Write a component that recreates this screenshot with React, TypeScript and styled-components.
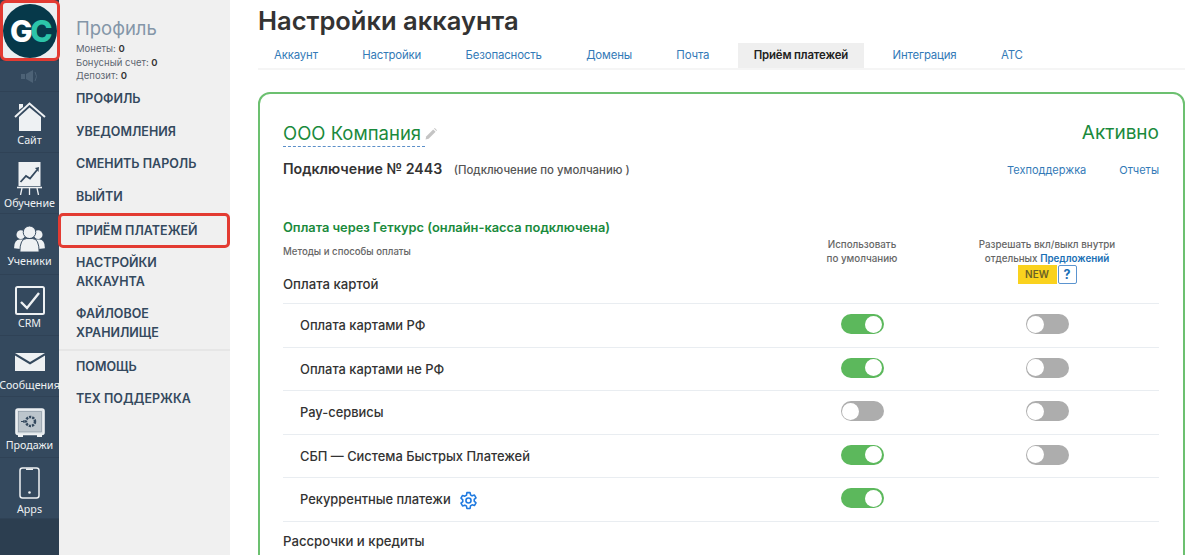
import styled, { createGlobalStyle } from 'styled-components';

const GlobalStyle = createGlobalStyle`
	html,
	body {
		margin: 0;
		height: 555px;
		overflow: hidden;
		background: #fff;
		font-family: Inter, 'Liberation Sans', sans-serif;
	}

	* {
		box-sizing: border-box;
	}
`;

const Page = styled.div`
	display: flex;
	width: 1200px;
	height: 555px;
	overflow: hidden;
`;

const Rail = styled.nav`
	flex: 0 0 59px;
	width: 59px;
	min-width: 0;
	display: flex;
	flex-direction: column;
	background: #2c3e50;
	height: 100%;
`;

const LogoBox = styled.div`
	position: relative;
	z-index: 2;
	flex: 0 0 61px;
	width: 60px;
	display: flex;
	align-items: center;
	justify-content: center;
	background: #eceff0;
	border: 3px solid #e33b32;
	border-radius: 6px;
`;

const LogoCircle = styled.div`
	flex: none;
	width: 54px;
	height: 54px;
	border-radius: 50%;
	background: #06394a;
	display: flex;
	align-items: center;
	justify-content: center;
	font: 800 30px/1 Inter, sans-serif;
	letter-spacing: -2.5px;
	color: #fff;
`;

const LogoAccent = styled.span`
	color: #2cc4a9;
`;

const SoundRow = styled.div`
	flex: 0 0 31px;
	display: flex;
	align-items: center;
	justify-content: center;
	background: #34495e;
	border-bottom: 1px solid #2f4256;
`;

const RailItem = styled.a<{ $pad: number; $gap: number }>`
	flex: 0 0 61px;
	display: flex;
	flex-direction: column;
	align-items: center;
	justify-content: flex-end;
	padding-bottom: ${(p) => p.$pad}px;
	background: #34495e;
	border-bottom: 1px solid #2f4256;
	color: #eef1f3;
	font: 400 10.7px/14px 'Noto Sans', sans-serif;
	white-space: nowrap;
	overflow: hidden;

	svg {
		display: block;
		flex: none;
		margin-bottom: ${(p) => p.$gap}px;
	}
`;

const Sidebar = styled.aside`
	flex: 0 0 171px;
	background: #f0f0f0;
	padding-top: 17px;
	height: 100%;
`;

const ProfileHead = styled.div`
	padding-left: 17px;
	margin-bottom: -1px;
`;

const ProfileTitle = styled.div`
	font: 400 18.5px/22px Inter, sans-serif;
	color: #8496a8;
	margin-bottom: 3px;
`;

const Balance = styled.div`
	font: 400 9.5px/13.7px Inter, sans-serif;
	color: #5d6670;

	b {
		font-weight: 600;
		color: #333;
	}
`;

const MenuItem = styled.a<{ $active?: boolean }>`
	display: block;
	position: relative;
	z-index: 1;
	padding: 7px 12px 6.6px 17px;
	font: 600 12.5px/19px Inter, sans-serif;
	color: #34495e;

	${(p) =>
		p.$active &&
		`
		width: 172px;
		height: 35px;
		margin: 0.6px 0 -2.5px -1px;
		padding: 5px 8px 3px 15px;
		border: 3px solid #e33b32;
		border-radius: 5px;
	`}
`;

const MenuDivider = styled.div`
	height: 2px;
	margin-bottom: -1px;
	background: #e6e6e6;
`;

const Main = styled.main`
	flex: 1;
	padding: 3px 15px 0 28px;
	min-width: 0;
`;

const Title = styled.h1`
	margin: 0 0 5px;
	font: 600 25.5px/35px Inter, sans-serif;
	color: #333;
`;

const Tabs = styled.div`
	display: flex;
	gap: 12.4px;
	border-bottom: 2px solid #f5f5f5;
	margin-bottom: 22px;
`;

const Tab = styled.a<{ $active?: boolean }>`
	padding: 0 16px;
	height: 25px;
	font: ${(p) => (p.$active ? 600 : 400)} 11.4px/25px Inter, sans-serif;
	letter-spacing: -0.15px;
	color: ${(p) => (p.$active ? '#222' : '#337ab7')};
	background: ${(p) => (p.$active ? '#efefef' : 'transparent')};
`;

const Card = styled.section`
	height: 520px;
	border: 2px solid #6cc070;
	border-radius: 12px;
	padding: 27px 24px 0 23px;
`;

const CardHead = styled.div`
	display: flex;
	justify-content: space-between;
	align-items: flex-start;
`;

const CompanyName = styled.div`
	display: flex;
	align-items: center;
`;

const CompanyText = styled.span`
	display: block;
	width: 142px;
	white-space: nowrap;
	border-bottom: 1px dashed #5b8fc9;
	padding-bottom: 1px;
	font: 400 18.5px/24px Inter, sans-serif;
	color: #1a8a3c;
`;

const Status = styled.div`
	font: 400 19px/24px Inter, sans-serif;
	color: #1a8a3c;
`;

const ConnectionRow = styled.div`
	display: flex;
	justify-content: space-between;
	align-items: center;
	margin-top: 12px;
`;

const ConnectionTitle = styled.div`
	font: 600 14.2px/20px Inter, sans-serif;
	color: #333;

	small {
		margin-left: 8px;
		font: 500 11.4px/20px Inter, sans-serif;
		color: #555;
	}
`;

const ConnectionLinks = styled.div`
	display: flex;
	gap: 33px;

	a {
		font: 400 11px/20px Inter, sans-serif;
		color: #337ab7;
	}
`;

const ProviderTitle = styled.div`
	margin-top: 38px;
	font: 600 12.85px/20px Inter, sans-serif;
	color: #1a8a3c;
`;

const HeaderGrid = styled.div`
	display: grid;
	grid-template-columns: 1fr 146px 224px;
	height: 65px;
`;

const MethodsCol = styled.div`
	display: flex;
	flex-direction: column;
	font: 500 9.65px/13px Inter, sans-serif;
	color: #666;
	padding-top: 7px;
`;

const SectionLabel = styled.div`
	font: 500 13.2px/18px Inter, sans-serif;
	color: #333;
`;

const MethodsSection = styled(SectionLabel)`
	margin-top: 17px;
`;

const HeadCol = styled.div`
	text-align: center;
	font: 500 9.8px/13.5px Inter, sans-serif;
	color: #666;

	a {
		color: #1a6fb5;
		font-weight: 600;
	}
`;

const BadgeRow = styled.div`
	display: flex;
	justify-content: center;
	gap: 1px;
`;

const NewBadge = styled.span`
	width: 39px;
	height: 19px;
	background: #fad21e;
	font: 600 10px/19px Inter, sans-serif;
	color: #6a6226;
`;

const HelpBadge = styled.span`
	width: 19px;
	height: 19px;
	border: 1px solid #5b94cf;
	border-radius: 2px;
	font: 700 12.5px/17px Inter, sans-serif;
	color: #1a6fb5;
`;

const MethodRow = styled.div`
	display: grid;
	grid-template-columns: 1fr 146px 224px;
	align-items: center;
	height: 43.5px;
	padding-top: 2px;
	border-top: 1px solid #e9edf1;
`;

const MethodName = styled.div`
	display: flex;
	align-items: center;
	gap: 8px;
	padding-left: 17px;
	font: 500 12.9px/18px Inter, sans-serif;
	color: #333;
`;

const ToggleCell = styled.div`
	display: flex;
	justify-content: center;
	margin-bottom: 4px;
`;

const Toggle = styled.span<{ $on: boolean }>`
	display: flex;
	justify-content: ${(p) => (p.$on ? 'flex-end' : 'flex-start')};
	width: 43px;
	height: 20px;
	padding: 1.5px;
	border-radius: 10px;
	background: ${(p) => (p.$on ? '#5cb85c' : '#adadad')};

	&::after {
		content: '';
		width: 17px;
		height: 17px;
		border-radius: 50%;
		background: #fff;
	}
`;

const NextSection = styled.div`
	border-top: 1px solid #e9edf1;
	padding-top: 10px;
`;

const icon = '#eef1f3';

const SoundIcon = () => (
	<svg width="20" height="15" viewBox="0 0 20 15" fill="#4d6276">
		<rect x="1" y="5" width="4" height="5" />
		<path d="M6 5 L13 1 V14 L6 10 Z" />
		<path d="M15 3 Q18 7.5 15 12" fill="none" stroke="#4d6276" />
	</svg>
);

const HomeIcon = () => (
	<svg width="32" height="29" viewBox="0 0 32 29">
		<path d="M5 2 h4 v3 L5 8 Z" fill={icon} />
		<path d="M1 15 L15.5 1.5 L31 15" fill="none" stroke={icon} strokeWidth="2" />
		<path d="M5 15 L15.5 5.5 L27 15 V29 H5 Z" fill={icon} />
	</svg>
);

const BoardIcon = () => (
	<svg width="25" height="33" viewBox="0 0 25 33">
		<rect x="1.5" y="0" width="22" height="24" fill={icon} />
		<path d="M3.5 20 L9 14 L13 16.5 L20 8" fill="none" stroke="#34495e" strokeWidth="1.8" />
		<path d="M18 6 L22 5 L21.5 10 Z" fill="#34495e" />
		<path d="M0 25.5 H25" stroke={icon} strokeWidth="1.6" />
		<path d="M5 26 L3.5 33 M12.5 26 V33 M20 26 L21.5 33" stroke={icon} strokeWidth="1.3" />
	</svg>
);

const PeopleIcon = () => (
	<svg width="31" height="27" viewBox="0 0 32 28" fill={icon}>
		<circle cx="7" cy="9" r="4.5" />
		<circle cx="25" cy="9" r="4.5" />
		<path d="M0 23 Q0 14 6 14 H9 V24 Z" />
		<path d="M32 23 Q32 14 26 14 H23 V24 Z" />
		<circle cx="16" cy="6.5" r="6.5" stroke="#34495e" />
		<path d="M6 27 Q6 13 13 13 H19 Q26 13 26 27 Z" stroke="#34495e" />
	</svg>
);

const CheckIcon = () => (
	<svg width="30" height="29" viewBox="0 0 30 29" fill="none">
		<rect x="1" y="1" width="28" height="27" rx="1.5" stroke={icon} strokeWidth="2" />
		<path d="M6 16 L12 22 L24 7" stroke={icon} strokeWidth="2.4" />
	</svg>
);

const MailIcon = () => (
	<svg width="30" height="18" viewBox="0 0 30 18" fill={icon}>
		<path d="M0 0 H30 L15 9 Z" />
		<path d="M0 2.5 L15 11.5 L30 2.5 V18 H0 Z" />
	</svg>
);

const SafeIcon = () => (
	<svg width="30" height="29" viewBox="0 0 30 29" fill="none">
		<rect x="1" y="1" width="28" height="25.5" rx="2" fill="#dfe4e8" stroke={icon} strokeWidth="1.6" />
		<rect x="3.5" y="3.5" width="23" height="20.5" fill="#34495e" fillOpacity="0.2" stroke="#34495e" strokeOpacity="0.5" strokeWidth="0.6" />
		<circle cx="15.5" cy="13.5" r="4.5" stroke="#34495e" strokeWidth="2.5" strokeDasharray="2.2 1" />
		<path d="M6 13.5 H9 M9 11.9 V15.1" stroke="#34495e" strokeWidth="1.2" />
		<path d="M3 28 H8 M22 28 H27" stroke={icon} strokeWidth="2" />
	</svg>
);

const PhoneIcon = () => (
	<svg width="21" height="32" viewBox="0 0 21 32" fill="none">
		<rect x="1" y="1" width="19" height="30" rx="2.5" stroke={icon} strokeWidth="1.5" />
		<path d="M7 1.5 H14 V3 H7 Z" fill={icon} />
		<circle cx="10.5" cy="25.5" r="1.3" fill={icon} />
	</svg>
);

const PencilIcon = () => (
	<svg width="12" height="12" viewBox="0 0 12 12" fill="#c4c4c4">
		<path d="M0.5 11.5 L1.2 8.4 L8.2 1.4 L10.6 3.8 L3.6 10.8 Z" />
		<path d="M9 0.6 L9.8 0 L12 2.2 L11.3 3 Z" />
	</svg>
);

const GearIcon = () => (
	<svg
		width="19"
		height="19"
		viewBox="0 0 24 24"
		fill="none"
		stroke="#1f7ae0"
		strokeWidth="2"
		strokeLinejoin="round"
	>
		<circle cx="12" cy="12" r="3.2" />
		<path d="M10 2 h4 l.6 3 a7.5 7.5 0 0 1 2 1.1 l2.9-1 2 3.5-2.3 2a7.5 7.5 0 0 1 0 2.3l2.3 2-2 3.5-2.9-1a7.5 7.5 0 0 1-2 1.1L14 22h-4l-.6-3a7.5 7.5 0 0 1-2-1.1l-2.9 1-2-3.5 2.3-2a7.5 7.5 0 0 1 0-2.3l-2.3-2 2-3.5 2.9 1a7.5 7.5 0 0 1 2-1.1Z" />
	</svg>
);

const railItems = [
	{ label: 'Сайт', Icon: HomeIcon, pad: 5, gap: 2 },
	{ label: 'Обучение', Icon: BoardIcon, pad: 3, gap: 1 },
	{ label: 'Ученики', Icon: PeopleIcon, pad: 6, gap: 1 },
	{ label: 'CRM', Icon: CheckIcon, pad: 5, gap: 1 },
	{ label: 'Сообщения', Icon: MailIcon, pad: 4, gap: 7 },
	{ label: 'Продажи', Icon: SafeIcon, pad: 5, gap: 1 },
	{ label: 'Apps', Icon: PhoneIcon, pad: 2, gap: 3 },
];

const tabs = ['Аккаунт', 'Настройки', 'Безопасность', 'Домены', 'Почта', 'Приём платежей', 'Интеграция', 'АТС'];

const methods = [
	{ name: 'Оплата картами РФ', byDefault: true, offers: false },
	{ name: 'Оплата картами не РФ', byDefault: true, offers: false },
	{ name: 'Pay-сервисы', byDefault: false, offers: false },
	{ name: 'СБП — Система Быстрых Платежей', byDefault: true, offers: false },
	{ name: 'Рекуррентные платежи', byDefault: true, offers: null, gear: true },
];

const App = () => (
	<Page>
		<GlobalStyle />
		<Rail>
			<LogoBox>
				<LogoCircle>
					G<LogoAccent>C</LogoAccent>
				</LogoCircle>
			</LogoBox>
			<SoundRow>
				<SoundIcon />
			</SoundRow>
			{railItems.map(({ label, Icon, pad, gap }) => (
				<RailItem key={label} $pad={pad} $gap={gap}>
					<Icon />
					{label}
				</RailItem>
			))}
		</Rail>
		<Sidebar>
			<ProfileHead>
				<ProfileTitle>Профиль</ProfileTitle>
				<Balance>
					Монеты: <b>0</b>
				</Balance>
				<Balance>
					Бонусный счет: <b>0</b>
				</Balance>
				<Balance>
					Депозит: <b>0</b>
				</Balance>
			</ProfileHead>
			<MenuItem>ПРОФИЛЬ</MenuItem>
			<MenuItem>УВЕДОМЛЕНИЯ</MenuItem>
			<MenuItem>СМЕНИТЬ ПАРОЛЬ</MenuItem>
			<MenuItem>ВЫЙТИ</MenuItem>
			<MenuItem $active>ПРИЁМ ПЛАТЕЖЕЙ</MenuItem>
			<MenuItem>НАСТРОЙКИ АККАУНТА</MenuItem>
			<MenuItem>ФАЙЛОВОЕ ХРАНИЛИЩЕ</MenuItem>
			<MenuDivider />
			<MenuItem>ПОМОЩЬ</MenuItem>
			<MenuItem>ТЕХ ПОДДЕРЖКА</MenuItem>
		</Sidebar>
		<Main>
			<Title>Настройки аккаунта</Title>
			<Tabs>
				{tabs.map((tab) => (
					<Tab key={tab} $active={tab === 'Приём платежей'}>
						{tab}
					</Tab>
				))}
			</Tabs>
			<Card>
				<CardHead>
					<CompanyName>
						<CompanyText>ООО Компания</CompanyText>
						<PencilIcon />
					</CompanyName>
					<Status>Активно</Status>
				</CardHead>
				<ConnectionRow>
					<ConnectionTitle>
						Подключение № 2443 <small>(Подключение по умолчанию )</small>
					</ConnectionTitle>
					<ConnectionLinks>
						<a>Техподдержка</a>
						<a>Отчеты</a>
					</ConnectionLinks>
				</ConnectionRow>
				<ProviderTitle>Оплата через Геткурс (онлайн-касса подключена)</ProviderTitle>
				<HeaderGrid>
					<MethodsCol>
						Методы и способы оплаты
						<MethodsSection>Оплата картой</MethodsSection>
					</MethodsCol>
					<HeadCol>
						Использовать
						<br />
						по умолчанию
					</HeadCol>
					<HeadCol>
						Разрешать вкл/выкл внутри
						<br />
						отдельных <a>Предложений</a>
						<BadgeRow>
							<NewBadge>NEW</NewBadge>
							<HelpBadge>?</HelpBadge>
						</BadgeRow>
					</HeadCol>
				</HeaderGrid>
				{methods.map((m) => (
					<MethodRow key={m.name}>
						<MethodName>
							{m.name}
							{m.gear && <GearIcon />}
						</MethodName>
						<ToggleCell>
							<Toggle $on={m.byDefault} />
						</ToggleCell>
						<ToggleCell>{m.offers !== null && <Toggle $on={m.offers} />}</ToggleCell>
					</MethodRow>
				))}
				<NextSection>
					<SectionLabel>Рассрочки и кредиты</SectionLabel>
				</NextSection>
			</Card>
		</Main>
	</Page>
);

export default App;
